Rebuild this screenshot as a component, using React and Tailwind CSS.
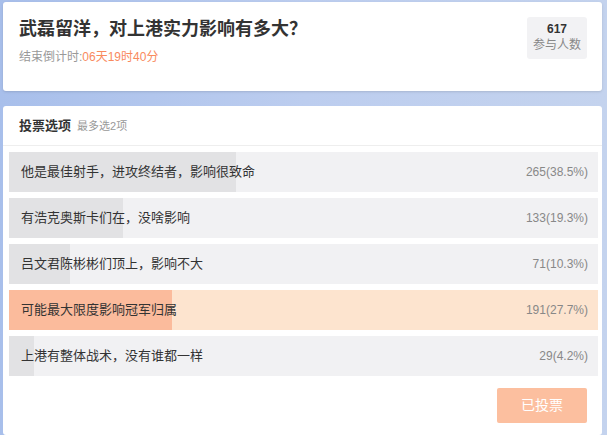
const font = { fontFamily: '"Liberation Sans", "Noto Sans CJK SC", sans-serif' };

const opciones = [
  { texto: "他是最佳射手，进攻终结者，影响很致命", votos: 265, pct: 38.5 },
  { texto: "有浩克奥斯卡们在，没啥影响", votos: 133, pct: 19.3 },
  { texto: "吕文君陈彬彬们顶上，影响不大", votos: 71, pct: 10.3 },
  { texto: "可能最大限度影响冠军归属", votos: 191, pct: 27.7, elegido: true },
  { texto: "上港有整体战术，没有谁都一样", votos: 29, pct: 4.2 },
];

export default function App() {
  return (
    <div
      className="w-[607px] h-[435px] overflow-hidden bg-gradient-to-r from-[#a8bfeb] via-[#bccdef] to-[#c4d3ee] pl-[3px] pr-[5px] pt-[2px] flex flex-col gap-[15px]"
      style={font}
    >
      {/* cabecera */}
      <div className="bg-white rounded-[3px] h-[89px] pl-4 pr-[15px] pt-[15px] flex justify-between shadow-sm">
        <div>
          <h1 className="text-[18px] font-bold text-[#333] leading-[24px]">
            武磊留洋，对上港实力影响有多大？
          </h1>
          <p className="text-[12px] text-[#999] mt-[8px] leading-[16px]">
            结束倒计时:<span className="text-[#f98a5e]">06天19时40分</span>
          </p>
        </div>
        <div className="w-[60px] h-[42px] bg-[#f2f2f4] rounded-[3px] flex flex-col items-center justify-center">
          <span className="text-[12px] font-bold text-[#333] leading-[15px]">617</span>
          <span className="text-[12px] text-[#888] leading-[17px]">参与人数</span>
        </div>
      </div>

      {/* votación */}
      <div className="bg-white rounded-[3px] flex-1 flex flex-col">
        <div className="h-[40px] border-b border-[#eeeeee] pl-4 flex items-end pb-[11px] gap-[6px]">
          <span className="text-[13px] font-bold text-[#333] leading-[16px]">投票选项</span>
          <span className="text-[11px] text-[#999] leading-[16px]">最多选2项</span>
        </div>
        <div className="pl-[6px] pr-[4px] pt-[6px] flex flex-col gap-[6px]">
          {opciones.map((o) => (
            <div
              key={o.texto}
              className={`relative h-[40px] flex items-center justify-between pl-[12px] pr-[10px] ${o.elegido ? "bg-[#fde4cf]" : "bg-[#f1f1f3]"}`}
            >
              <div
                className={`absolute left-0 top-0 h-full ${o.elegido ? "bg-[#fbbb9c]" : "bg-[#e2e2e4]"}`}
                style={{ width: `${o.pct}%` }}
              />
              <span className="relative text-[13px] text-[#333]">{o.texto}</span>
              <span className="relative text-[12px] text-[#888]">
                {o.votos}({o.pct}%)
              </span>
            </div>
          ))}
        </div>
        <div className="flex justify-end pr-[15px] mt-[12px]">
          <button className="w-[90px] h-[35px] bg-[#fcbf9f] text-white text-[14px] rounded-[2px]">
            已投票
          </button>
        </div>
      </div>
    </div>
  );
}
